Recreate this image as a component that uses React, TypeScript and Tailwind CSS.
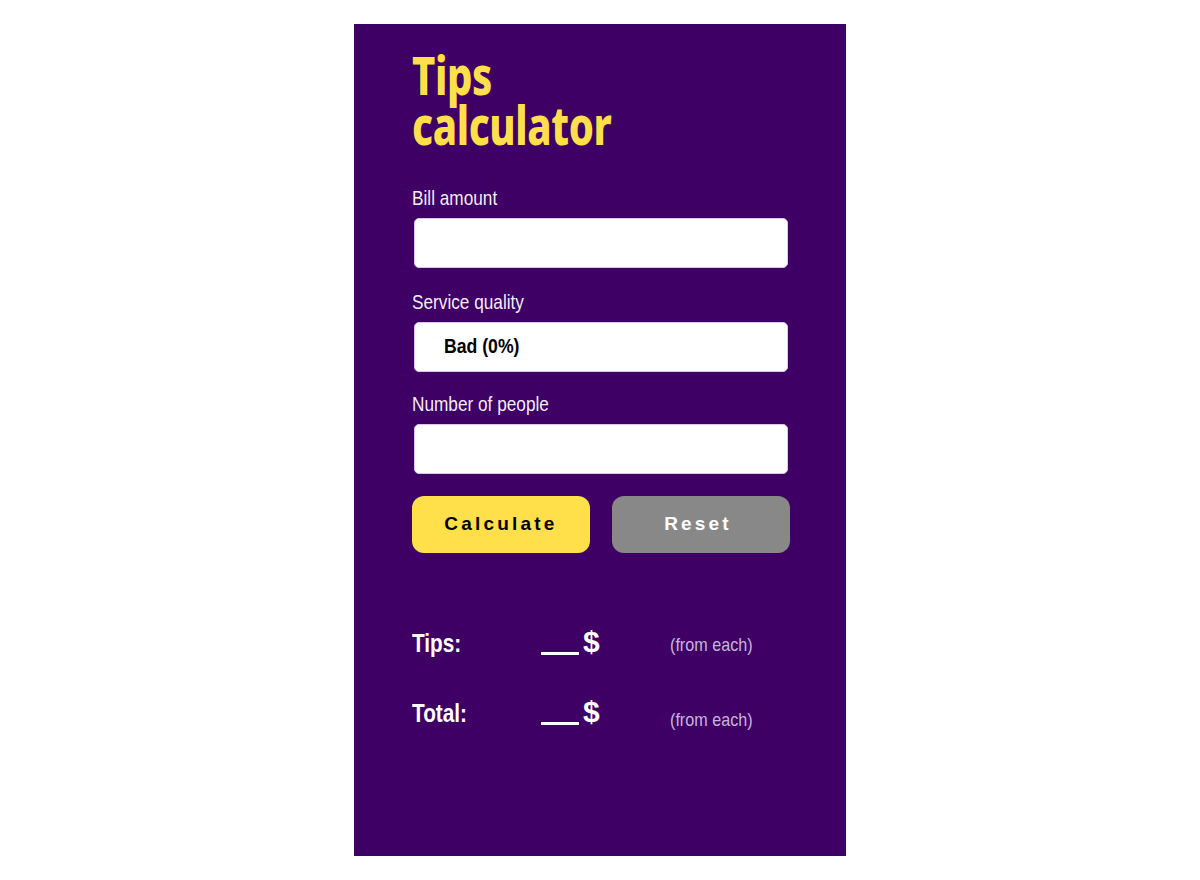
import React from 'react';

const sans = { fontFamily: '"Liberation Sans", Arial, sans-serif' };

// the reference uses a condensed face; squeeze regular glyphs horizontally
const Narrow = ({ children, className = '' }: { children: React.ReactNode; className?: string }) => (
  <span className={`inline-block origin-left whitespace-nowrap ${className}`}>{children}</span>
);

const Field = ({ label, children }: { label: string; children: React.ReactNode }) => (
  <div className="flex flex-col">
    <label className="text-[21px] leading-[24px] text-white/95 mb-[8px]" style={sans}>
      <Narrow className="scale-x-[0.82]">{label}</Narrow>
    </label>
    {children}
  </div>
);

const Result = ({ label, noteClass }: { label: string; noteClass: string }) => (
  <div className="flex items-end h-[30px]">
    <span className="w-[129px] text-[25px] font-bold text-white leading-[28px]">
      <Narrow className="scale-x-[0.83]">{label}</Narrow>
    </span>
    <span className="w-[129px] flex items-end text-white font-bold">
      <span className="inline-block w-[38px] h-[3px] bg-white mb-[2px] mr-[4px]" />
      <span className="text-[30px] leading-[30px]">$</span>
    </span>
    <span className={`text-[19px] text-[#c8b4dc] leading-[24px] ${noteClass}`}>
      <Narrow className="scale-x-[0.85]">(from each)</Narrow>
    </span>
  </div>
);

const App = () => {
  return (
    <div className="w-[1200px] h-[880px] bg-white flex justify-center pt-[24px]">
      <div className="w-[492px] h-[832px] bg-[#3f0066] pl-[58px] pr-[56px] pt-[25px]">
        <h1
          className="text-[#ffdf4a] text-[54px] leading-[50px] font-extrabold tracking-[-0.5px] flex flex-col"
          style={{ fontFamily: '"Noto Sans", "Open Sans", sans-serif' }}
        >
          <Narrow className="scale-x-[0.74]">Tips</Narrow>
          <Narrow className="scale-x-[0.74]">calculator</Narrow>
        </h1>

        <div className="mt-[37px] flex flex-col gap-[22px]">
          <Field label="Bill amount">
            <input
              type="text"
              className="ml-[2px] w-[374px] h-[50px] bg-white rounded-[5px] border border-[#d9c8e6] outline-none"
            />
          </Field>
          <Field label="Service quality">
            <div
              className="ml-[2px] w-[374px] h-[50px] bg-white rounded-[5px] border border-[#d9c8e6] flex items-center pl-[29px] pb-[3px] text-[21px] font-bold text-black"
              style={sans}
            >
              <Narrow className="scale-x-[0.84]">Bad (0%)</Narrow>
            </div>
          </Field>
          <div className="-mt-[2px]">
            <Field label="Number of people">
              <input
                type="text"
                className="ml-[2px] w-[374px] h-[50px] bg-white rounded-[5px] border border-[#d9c8e6] outline-none"
              />
            </Field>
          </div>
        </div>

        <div className="mt-[22px] flex gap-[22px]" style={sans}>
          <button className="w-[178px] h-[57px] rounded-[12px] bg-[#ffdf4a] text-black text-[19px] font-bold tracking-[3.2px]">
            Calculate
          </button>
          <button className="w-[178px] h-[57px] rounded-[12px] bg-[#888888] text-white text-[19px] font-bold tracking-[3.2px] pr-[6px]">
            Reset
          </button>
        </div>

        <div className="mt-[74px] flex flex-col gap-[40px]" style={sans}>
          <Result label="Tips:" noteClass="mb-0" />
          <Result label="Total:" noteClass="-mb-[5px]" />
        </div>
      </div>
    </div>
  );
};

export default App;
